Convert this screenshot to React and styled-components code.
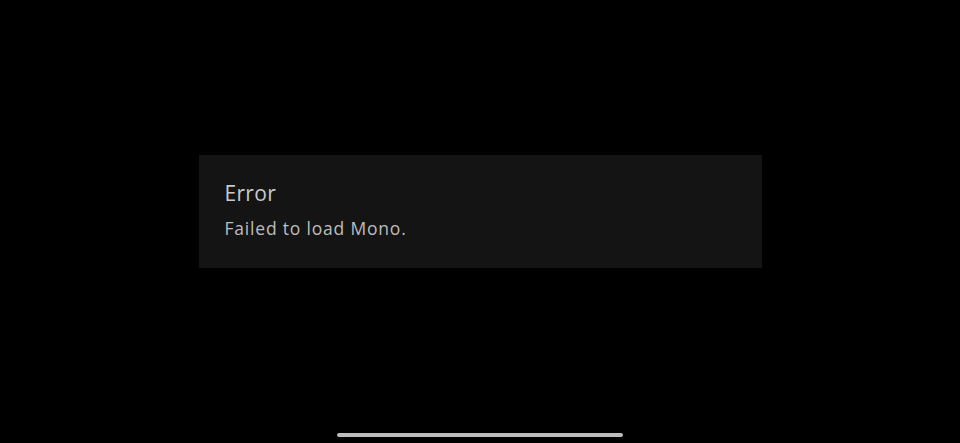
import React from "react";
import styled, { createGlobalStyle } from "styled-components";

const Global = createGlobalStyle`
  html, body { margin: 0; padding: 0; background: #000; }
  body { font-family: "Open Sans", "Noto Sans", sans-serif; }
`;

const Screen = styled.div`
  width: 960px;
  height: 443px;
  background: #000;
  display: flex;
  flex-direction: column;
  align-items: center;
  box-sizing: border-box;
  padding-top: 155px;
`;

const Card = styled.div`
  width: 563px;
  height: 113px;
  box-sizing: border-box;
  background: #141414;
  padding: 24px 26px;
  display: flex;
  flex-direction: column;
  gap: 9px;
`;

const Title = styled.div`
  font-size: 21px;
  line-height: 28px;
  color: #c9c9c9;
  font-weight: 400;
  letter-spacing: 0.3px;
`;

const Message = styled.div`
  font-size: 17.5px;
  line-height: 24px;
  color: #bdbdbd;
  letter-spacing: 0.8px;
`;

const Spacer = styled.div`
  flex: 1;
`;

const HomeIndicator = styled.div`
  width: 286px;
  height: 4px;
  border-radius: 2px;
  background: #bcbcbc;
  margin-bottom: 6px;
`;

export default function App() {
  return (
    <>
      <Global />
      <Screen>
        <Card>
          <Title>Error</Title>
          <Message>Failed to load Mono.</Message>
        </Card>
        <Spacer />
        <HomeIndicator />
      </Screen>
    </>
  );
}
